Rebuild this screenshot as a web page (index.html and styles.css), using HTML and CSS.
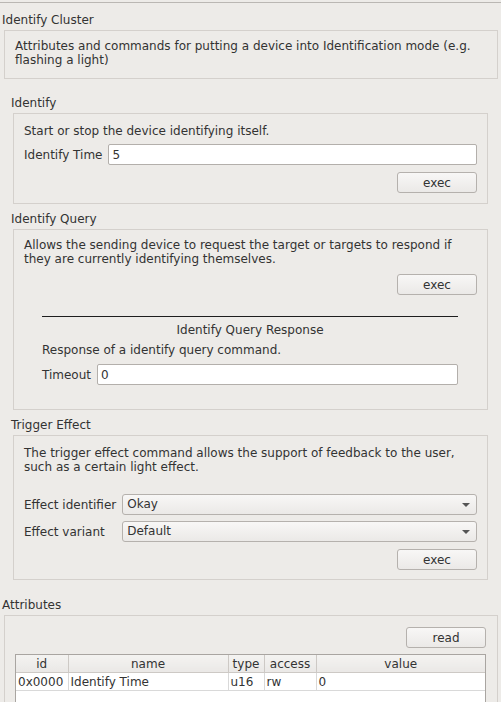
FILE: index.html
```html
<!DOCTYPE html>
<html lang="en">
<head>
    <meta charset="UTF-8">
    <meta name="viewport" content="width=device-width, initial-scale=1.0">
    <title>Identify Cluster</title>
    <link rel="stylesheet" href="styles.css">
</head>
<body>
    <div class="frame">
        <section class="group">
            <div class="group-title">Identify Cluster</div>
            <div class="group-box cluster-box">
                <p>Attributes and commands for putting a device into Identification mode (e.g.<br>flashing a light)</p>
            </div>
        </section>

        <div class="commands">
            <section class="group">
                <div class="group-title">Identify</div>
                <div class="group-box identify-box">
                    <p>Start or stop the device identifying itself.</p>
                    <div class="field-row">
                        <label for="identify-time">Identify Time</label>
                        <input type="text" id="identify-time" value="5">
                    </div>
                    <div class="actions">
                        <button type="button">exec</button>
                    </div>
                </div>
            </section>

            <section class="group query-group">
                <div class="group-title">Identify Query</div>
                <div class="group-box query-box">
                    <p>Allows the sending device to request the target or targets to respond if<br>they are currently identifying themselves.</p>
                    <div class="actions query-actions">
                        <button type="button">exec</button>
                    </div>
                    <div class="response">
                        <div class="response-title">Identify Query Response</div>
                        <p class="response-desc">Response of a identify query command.</p>
                        <div class="field-row timeout-row">
                            <label for="timeout">Timeout</label>
                            <input type="text" id="timeout" value="0">
                        </div>
                    </div>
                </div>
            </section>

            <section class="group trigger-group">
                <div class="group-title">Trigger Effect</div>
                <div class="group-box trigger-box">
                    <p>The trigger effect command allows the support of feedback to the user,<br>such as a certain light effect.</p>
                    <div class="form-grid">
                        <label>Effect identifier</label>
                        <div class="combo">Okay<span class="arrow"></span></div>
                        <label>Effect variant</label>
                        <div class="combo">Default<span class="arrow"></span></div>
                    </div>
                    <div class="actions trigger-actions">
                        <button type="button">exec</button>
                    </div>
                </div>
            </section>
        </div>

        <section class="group attributes">
            <div class="group-title">Attributes</div>
            <div class="group-box attr-box">
                <div class="actions">
                    <button type="button">read</button>
                </div>
                <div class="table-frame">
                    <table>
                        <colgroup>
                            <col class="col-id">
                            <col class="col-name">
                            <col class="col-type">
                            <col class="col-access">
                            <col>
                        </colgroup>
                        <thead>
                            <tr>
                                <th>id</th>
                                <th>name</th>
                                <th>type</th>
                                <th>access</th>
                                <th>value</th>
                            </tr>
                        </thead>
                        <tbody>
                            <tr>
                                <td>0x0000</td>
                                <td>Identify Time</td>
                                <td>u16</td>
                                <td>rw</td>
                                <td>0</td>
                            </tr>
                        </tbody>
                    </table>
                </div>
            </div>
        </section>
    </div>
</body>
</html>
```

FILE: styles.css
```css
body {
    margin: 0;
    background-color: #edebe8;
    font-family: "DejaVu Sans", sans-serif;
    font-size: 12px;
    line-height: 14px;
    color: #333;
    overflow: hidden;
}

p {
    margin: 0;
}

.frame {
    margin-top: 2px;
    border-top: 1px solid #bab7b3;
    padding: 10px 3px 0 2px;
}

.group-title {
    height: 14px;
}

.group-box {
    margin: 3px 0 0 2px;
    border: 1px solid #d4d0cc;
}

.cluster-box {
    padding: 8px 10px 11px 10px;
}

.commands {
    padding: 17px 10px 0 9px;
}

.identify-box {
    padding: 10px 10px 10px 10px;
}

.query-group {
    margin-top: 8px;
}

.query-box {
    padding: 8px 10px 24px 10px;
}

.trigger-group {
    margin-top: 8px;
}

.trigger-box {
    padding: 10px 10px 9px 10px;
}

.field-row {
    display: flex;
    align-items: center;
    gap: 6px;
    margin-top: 6px;
}

.field-row input {
    flex: 1;
}

input[type="text"] {
    height: 21px;
    box-sizing: border-box;
    border: 1px solid #b3afab;
    border-radius: 2px;
    background-color: #fff;
    padding: 0 3px;
    font-family: inherit;
    font-size: 12px;
    color: #333;
    outline: none;
}

.actions {
    display: flex;
    justify-content: flex-end;
    margin-top: 7px;
}

button {
    width: 80px;
    height: 21px;
    box-sizing: border-box;
    border: 1px solid #b5b1ad;
    border-radius: 3px;
    background: linear-gradient(#f8f7f6, #ebe9e7);
    font-family: inherit;
    font-size: 12px;
    color: #333;
    padding: 0;
}

.query-actions {
    margin-top: 8px;
}

.response {
    margin: 21px 19px 0 18px;
    border-top: 1px solid #1e1e1e;
    padding-top: 6px;
}

.response-title {
    text-align: center;
}

.response-desc {
    margin-top: 6px;
}

.timeout-row {
    margin-top: 7px;
}

.form-grid {
    display: grid;
    grid-template-columns: auto 1fr;
    column-gap: 6px;
    row-gap: 6px;
    align-items: center;
    margin-top: 20px;
}

.combo {
    position: relative;
    height: 21px;
    box-sizing: border-box;
    border: 1px solid #b5b1ad;
    border-radius: 3px;
    background: linear-gradient(#f8f7f6, #ebe9e7);
    padding: 0 4px;
    line-height: 19px;
}

.arrow {
    position: absolute;
    right: 6px;
    top: 8px;
    width: 0;
    height: 0;
    border-left: 4px solid transparent;
    border-right: 4px solid transparent;
    border-top: 4px solid #555;
}

.trigger-actions {
    margin-top: 7px;
}

.attributes {
    margin-top: 18px;
}

.attr-box {
    padding: 11px 11px 0 10px;
    height: 75px;
    border-bottom: none;
}

.attr-box .actions {
    margin-top: 0;
}

.table-frame {
    margin-top: 6px;
    border: 1px solid #a9a5a1;
    border-bottom: none;
    background-color: #fff;
    height: 47px;
}

table {
    width: 100%;
    table-layout: fixed;
    border-collapse: collapse;
}

.col-id {
    width: 52px;
}

.col-name {
    width: 160px;
}

.col-type {
    width: 36px;
}

.col-access {
    width: 52px;
}

th {
    height: 17px;
    padding: 0;
    font-weight: normal;
    text-align: center;
    background: linear-gradient(#f4f3f1, #eae8e6);
    border-right: 1px solid #cdc9c5;
    border-bottom: 1px solid #cdc9c5;
}

td {
    height: 17px;
    padding: 0 2px;
    white-space: nowrap;
    overflow: hidden;
    border-right: 1px solid #d9d9d9;
    border-bottom: 1px solid #d9d9d9;
}

th:last-child,
td:last-child {
    border-right: none;
}
```
